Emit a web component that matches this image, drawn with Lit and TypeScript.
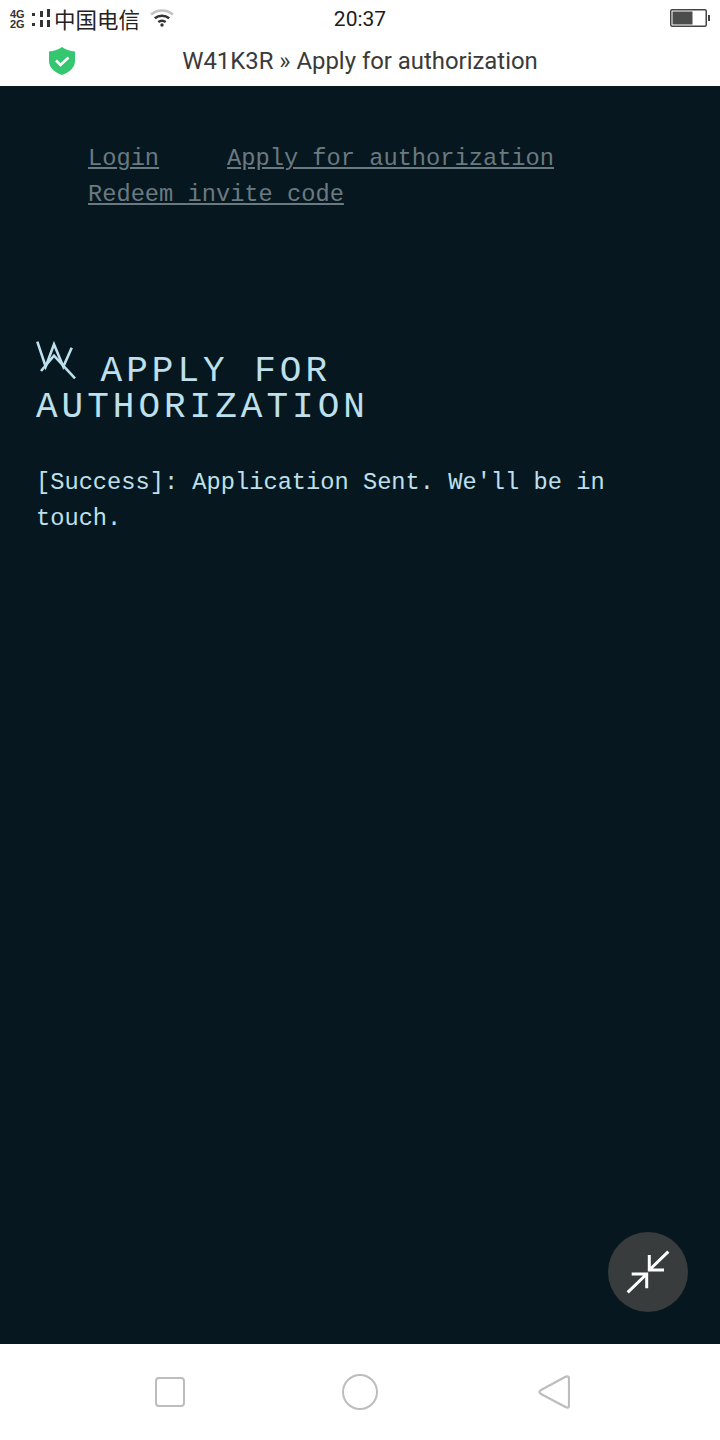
import { LitElement, html, css } from 'lit';
import { customElement } from 'lit/decorators.js';

@customElement('app-root')
export class AppRoot extends LitElement {
  static styles = css`
    :host {
      display: flex;
      flex-direction: column;
      width: 720px;
      height: 1440px;
      background: #fff;
      overflow: hidden;
      position: relative;
    }

    /* phone status bar */
    .status {
      height: 40px;
      flex: none;
      display: grid;
      grid-template-columns: 1fr auto 1fr;
      align-items: center;
      background: #fff;
      color: #222;
    }
    .status-left {
      display: flex;
      align-items: center;
      height: 40px;
      padding-left: 10px;
    }
    .net {
      display: flex;
      flex-direction: column;
      font: 700 11px/10px 'Liberation Sans', sans-serif;
      color: #333;
      width: 22px;
      margin-bottom: 2px;
    }
    .signal {
      display: block;
      margin-bottom: 4px;
    }
    .carrier {
      font: 400 21.5px/30px 'Noto Sans CJK SC', sans-serif;
      color: #222;
      margin-bottom: 3px;
    }
    .wifi {
      display: block;
      margin-left: 10px;
      margin-bottom: 4px;
    }
    .time {
      font: 400 21px/36px 'Roboto', sans-serif;
      color: #1d1d1d;
      margin-bottom: 3px;
    }
    .status-right {
      display: flex;
      justify-content: flex-end;
      height: 18px;
      padding-right: 10px;
      margin-bottom: 4px;
    }

    /* browser title bar */
    .titlebar {
      height: 46px;
      flex: none;
      display: flex;
      align-items: center;
      justify-content: center;
      background: #fff;
      position: relative;
    }
    .shield {
      position: absolute;
      left: 49px;
      top: 7px;
    }
    .title {
      font: 400 23.9px/42px 'Roboto', sans-serif;
      color: #3a3a3a;
      margin-bottom: 4px;
    }

    /* page */
    .page {
      flex: 1;
      background: #07171f;
      position: relative;
      padding: 55px 36px 0;
      font-family: 'Liberation Mono', monospace;
    }
    .nav {
      display: flex;
      flex-wrap: wrap;
      column-gap: 68px;
      padding-left: 52px;
      width: 560px;
      font-size: 23.7px;
      line-height: 36px;
    }
    .nav a {
      color: #6a7a80;
      text-decoration: underline;
      white-space: nowrap;
    }
    .heading {
      margin: 128px 0 0;
      font-size: 36px;
      font-weight: 400;
      line-height: 36px;
      letter-spacing: 4px;
      color: #bde0ec;
    }
    .logo {
      display: inline-block;
      vertical-align: baseline;
      margin-right: -1px;
    }
    .message {
      margin: 39px 0 0;
      width: 580px;
      font-size: 23.7px;
      line-height: 36px;
      color: #bde0ec;
    }

    .fab {
      position: absolute;
      right: 32px;
      bottom: 32px;
      width: 80px;
      height: 80px;
      border-radius: 50%;
      background: #383c3c;
      display: flex;
      align-items: center;
      justify-content: center;
    }

    /* android nav bar */
    .softkeys {
      height: 96px;
      flex: none;
      background: #fff;
      display: flex;
      align-items: center;
      padding-left: 155px;
    }
    .softkeys svg {
      display: block;
    }
    .softkeys .home {
      margin-left: 157px;
    }
    .softkeys .back {
      margin-left: 160px;
    }
  `;

  render() {
    return html`
      <div class="status">
        <div class="status-left">
          <div class="net"><span>4G</span><span>2G</span></div>
          <svg class="signal" width="22" height="20" viewBox="0 0 22 20" fill="#333">
            <rect x="0" y="5" width="3" height="3"></rect><rect x="0" y="15" width="3" height="3"></rect>
            <rect x="8" y="3" width="3" height="6"></rect><rect x="8" y="12" width="3" height="7"></rect>
            <rect x="15" y="1" width="3" height="8"></rect><rect x="15" y="12" width="3" height="7"></rect>
          </svg>
          <span class="carrier">中国电信</span>
          <svg class="wifi" width="24" height="20" viewBox="0 0 24 20" fill="none" stroke-linecap="butt">
            <path d="M1 6.500C7.500 1 16.500 1 23 6.500" stroke="#c4c4c4" stroke-width="2.500"></path>
            <path d="M4.800 10.300C9 7 15 7 19.200 10.300" stroke="#333" stroke-width="2.500"></path>
            <path d="M8.300 14C10.500 12.400 13.500 12.400 15.700 14" stroke="#333" stroke-width="2.500"></path>
            <circle cx="12" cy="17" r="1.700" fill="#333"></circle>
          </svg>
        </div>
        <div class="time">20:37</div>
        <div class="status-right">
          <svg width="40" height="18" viewBox="0 0 40 18">
            <rect x="0.750" y="0.750" width="35.500" height="16.500" rx="1.500" fill="none" stroke="#444" stroke-width="1.500"></rect>
            <rect x="2.500" y="2.500" width="20" height="13" fill="#4a4d4b"></rect>
            <rect x="38" y="6" width="2" height="6" fill="#444"></rect>
          </svg>
        </div>
      </div>

      <div class="titlebar">
        <svg class="shield" width="26" height="28" viewBox="0 0 26 28">
          <path d="M13 0C16.500 2.500 21 4 26 4.500V14C26 21 20 25.500 13 28C6 25.500 0 21 0 14V4.500C5 4 9.500 2.500 13 0Z" fill="#35c76f"></path>
          <path d="M7 13.500L11.500 18L19.500 10.500" fill="none" stroke="#fff" stroke-width="2.500"></path>
        </svg>
        <span class="title">W41K3R » Apply for authorization</span>
      </div>

      <div class="page">
        <div class="nav">
          <a>Login</a><a>Apply for authorization</a><a>Redeem invite code</a>
        </div>
        <h1 class="heading">
          <svg class="logo" width="40" height="40" viewBox="0 0 40 40" fill="none" stroke="#bde0ec" stroke-width="2.600">
            <path d="M1.300 0.700L9.700 25.700L18 3.300L27.300 25.700L35.700 6.700"></path>
            <path d="M5 30L18 14.700L39 37.300"></path>
          </svg>
          APPLY FOR AUTHORIZATION
        </h1>
        <p class="message">[Success]: Application Sent. We'll be in touch.</p>
        <div class="fab">
          <svg width="44" height="44" viewBox="0 0 44 44" fill="none" stroke="#fff" stroke-width="3">
            <path d="M1.700 42.300L20.700 24M5.700 24H20.700V38.300"></path>
            <path d="M42.300 1.700L23.300 20M38 20H23.300V5"></path>
          </svg>
        </div>
      </div>

      <div class="softkeys">
        <svg width="30" height="30" viewBox="0 0 30 30" fill="none" stroke="#bdbdbd" stroke-width="2">
          <rect x="1" y="1" width="28" height="28" rx="3"></rect>
        </svg>
        <svg class="home" width="36" height="36" viewBox="0 0 36 36" fill="none" stroke="#bdbdbd" stroke-width="2">
          <circle cx="18" cy="18" r="17"></circle>
        </svg>
        <svg class="back" width="32" height="34" viewBox="0 0 32 34" fill="none" stroke="#bdbdbd" stroke-width="2.200" stroke-linejoin="round">
          <path d="M28 1.500C30 1 31 2 31 3.500V30.500C31 32.500 29.500 33 28 32.300L3 19C1 18 1 16 3 15Z"></path>
        </svg>
      </div>
    `;
  }
}
